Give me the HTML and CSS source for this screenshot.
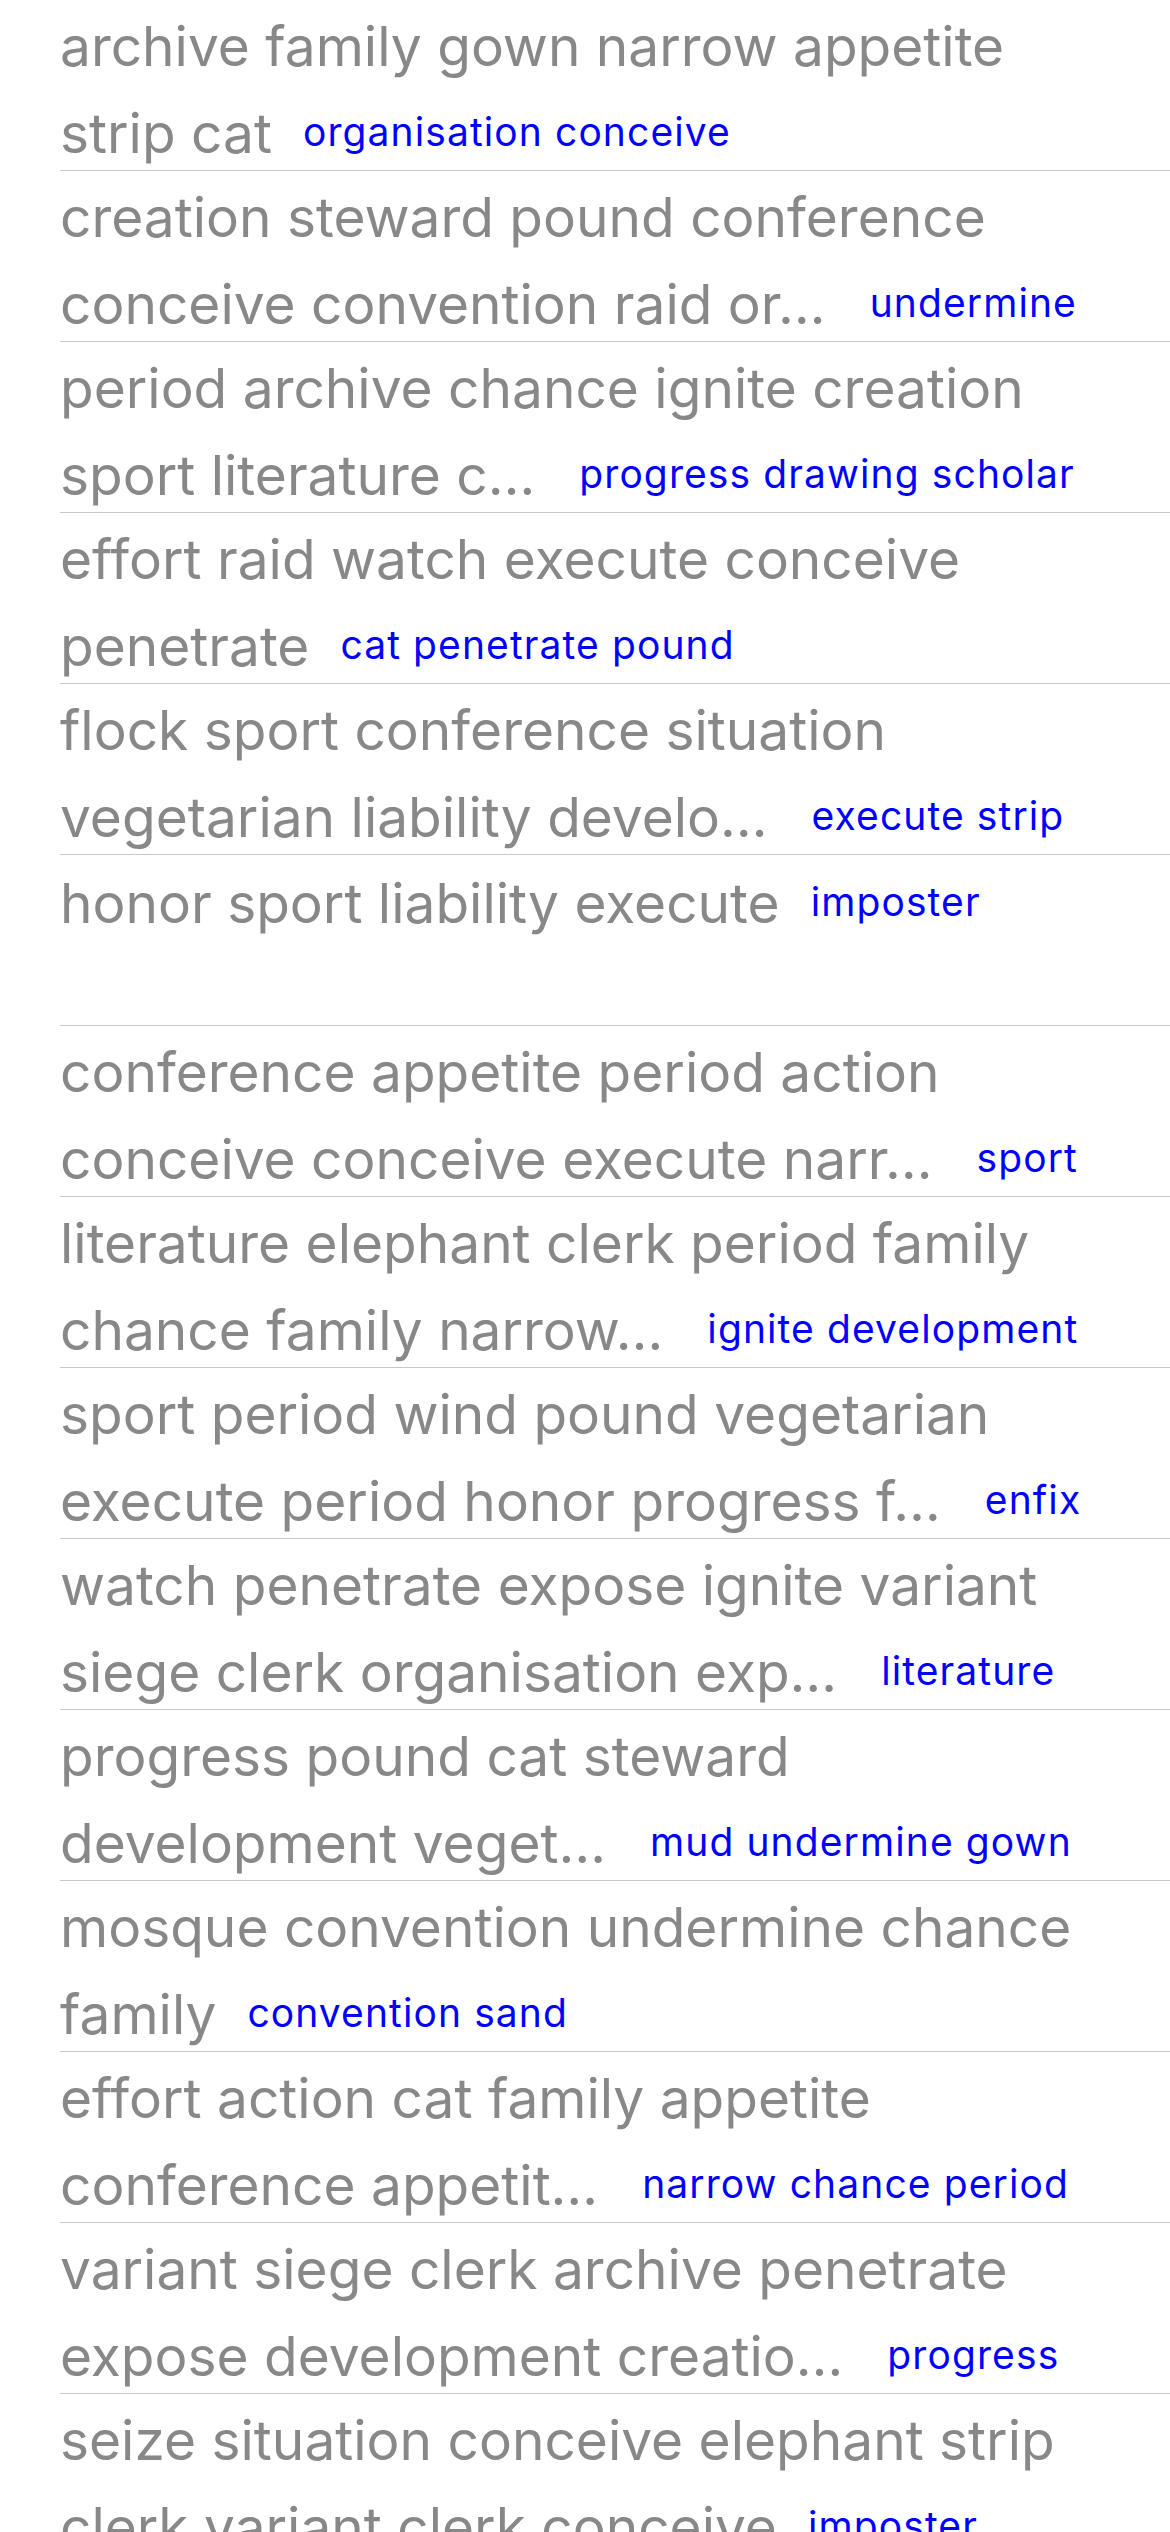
FILE: index.html
```html
<!DOCTYPE html>
<html lang="en">
<head>
<meta charset="utf-8">
<title>List</title>
<link rel="stylesheet" href="styles.css">
</head>
<body>
<ul class="list">
  <li class="row"><p class="entry"><span class="title">archive family gown narrow appetite strip cat</span><a class="link">organisation conceive</a></p></li>
  <li class="row"><p class="entry"><span class="title cut">creation steward pound conference conceive convention raid or…</span><a class="link">undermine</a></p></li>
  <li class="row"><p class="entry"><span class="title cut">period archive chance ignite creation sport literature c…</span><a class="link">progress drawing scholar</a></p></li>
  <li class="row"><p class="entry"><span class="title">effort raid watch execute conceive penetrate</span><a class="link">cat penetrate pound</a></p></li>
  <li class="row"><p class="entry"><span class="title cut">flock sport conference situation vegetarian liability develo…</span><a class="link">execute strip</a></p></li>
  <li class="row"><p class="entry"><span class="title">honor sport liability execute</span><a class="link">imposter</a></p></li>
  <li class="row"><p class="entry"><span class="title cut">conference appetite period action conceive conceive execute narr…</span><a class="link">sport</a></p></li>
  <li class="row"><p class="entry"><span class="title cut">literature elephant clerk period family chance family narrow…</span><a class="link">ignite development</a></p></li>
  <li class="row"><p class="entry"><span class="title cut">sport period wind pound vegetarian execute period honor progress f…</span><a class="link">enfix</a></p></li>
  <li class="row"><p class="entry"><span class="title cut">watch penetrate expose ignite variant siege clerk organisation exp…</span><a class="link">literature</a></p></li>
  <li class="row"><p class="entry"><span class="title cut">progress pound cat steward development veget…</span><a class="link">mud undermine gown</a></p></li>
  <li class="row"><p class="entry"><span class="title">mosque convention undermine chance family</span><a class="link">convention sand</a></p></li>
  <li class="row"><p class="entry"><span class="title cut">effort action cat family appetite conference appetit…</span><a class="link">narrow chance period</a></p></li>
  <li class="row"><p class="entry"><span class="title cut">variant siege clerk archive penetrate expose development creatio…</span><a class="link">progress</a></p></li>
  <li class="row"><p class="entry"><span class="title">seize situation conceive elephant strip clerk variant clerk conceive</span><a class="link">imposter</a></p></li>
</ul>
</body>
</html>
```

FILE: styles.css
```css
* {
  box-sizing: border-box;
}

html, body {
  margin: 0;
  padding: 0;
  background: #ffffff;
}

body {
  font-family: Inter, "Noto Sans", "Liberation Sans", sans-serif;
  overflow: hidden;
}

.list {
  list-style: none;
  margin: 0 0 0 60px;
  padding: 0;
}

.row {
  height: 171px;
  border-bottom: 1px solid #c8c8c8;
  overflow: hidden;
}

.entry {
  margin: 0;
  padding: 4px 50px 0 0;
  font-size: 55px;
  line-height: 85px;
  color: #888888;
}

.title {
  color: #888888;
}

.link {
  color: #0000ff;
  font-size: 39px;
  letter-spacing: 1.1px;
  margin-left: 31px;
  white-space: nowrap;
  vertical-align: 7px;
}

.title.cut + .link {
  margin-left: 44px;
}
```
